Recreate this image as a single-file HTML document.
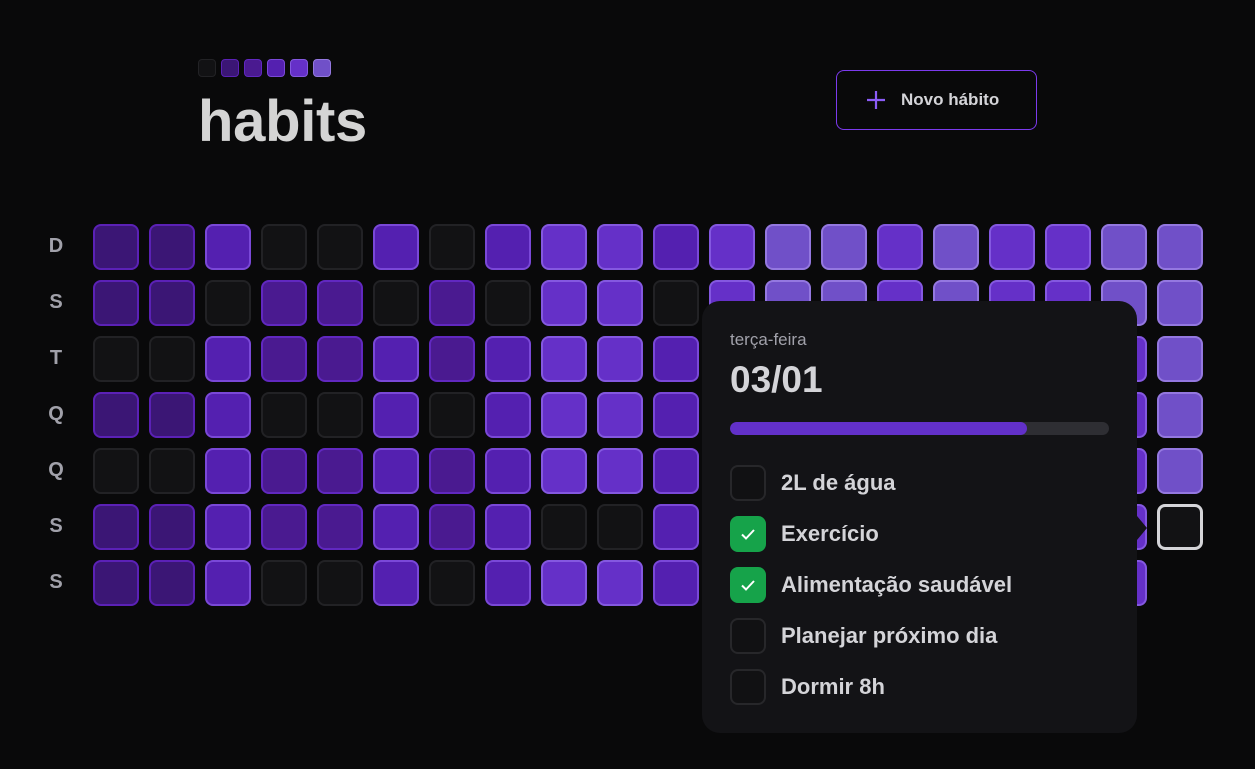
<!DOCTYPE html>
<html><head><meta charset="utf-8"><style>
*{margin:0;padding:0;box-sizing:border-box}
body{width:1255px;height:769px;background:#09090a;font-family:"Liberation Sans",sans-serif;position:relative;overflow:hidden;color:#d4d4d8}
.logo{position:absolute;top:59px;left:198px;display:flex;gap:5px}
.logo i{width:18px;height:18px;border-radius:4px;border:1.5px solid}
h1{position:absolute;left:198px;top:88px;font-size:58px;font-weight:700;color:#d4d4d4;letter-spacing:-0.3px}
.btn{position:absolute;left:836px;top:70px;width:201px;height:60px;border:1.5px solid #7c3aed;border-radius:8px;display:flex;align-items:center;padding-left:28px;font-weight:700;font-size:17px;color:#d4d4d8}
.btn svg{margin-right:14px}
.lbl{position:absolute;left:46px;width:20px;text-align:center;font-size:20px;font-weight:700;color:#a1a1aa}
.grid{position:absolute;left:93px;top:224px;display:grid;grid-template-columns:repeat(20,46px);grid-auto-rows:46px;gap:10px}
.grid i{border-radius:8px;border:2px solid;display:block}
.l0{background:#121214;border-color:#222225!important}
.l1{background:#3b1675;border-color:#5b21b6!important}
.l2{background:#4a1a90;border-color:#6128c0!important}
.l3{background:#5420b0;border-color:#7a48d8!important}
.l4{background:#6530c8;border-color:#8458e0!important}
.l5{background:#7050c8;border-color:#9478e0!important}
.today{background:#121214;border:3px solid #d4d4d8!important}
.none{visibility:hidden}
.tip{position:absolute;left:702px;top:301px;width:435px;height:432px;background:#131316;border-radius:18px;padding:29px 28px}
.tip:after{content:"";position:absolute;right:-10px;top:215px;border:12px solid transparent;border-left:10px solid #131316;border-right:0}
.day{font-size:17px;color:#a1a1aa}
.date{font-size:37px;font-weight:700;color:#d4d4d8;margin-top:9px}
.bar{margin-top:21px;width:379px;height:13px;border-radius:7px;background:#2e2e33;overflow:hidden}
.bar b{display:block;width:297px;height:100%;background:#6230c9;border-radius:7px}
.items{margin-top:30px}
.it{display:flex;align-items:center;height:36px;margin-bottom:15px;font-size:22px;font-weight:700;color:#d4d4d8}
.cb{width:36px;height:36px;border-radius:8px;border:2px solid #27272a;background:#111113;margin-right:15px;display:flex;align-items:center;justify-content:center}
.cb.on{background:#16a34a;border-color:#16a34a}
</style></head><body>
<div class="logo">
<i style="background:#121214;border-color:#222225"></i>
<i style="background:#3b1675;border-color:#5b21b6"></i>
<i style="background:#4a1a90;border-color:#6128c0"></i>
<i style="background:#5420b0;border-color:#7a48d8"></i>
<i style="background:#6530c8;border-color:#8458e0"></i>
<i style="background:#7050c8;border-color:#9478e0"></i>
</div>
<h1>habits</h1>
<div class="btn"><svg width="22" height="22" viewBox="0 0 22 22"><path d="M11 2v18M2 11h18" stroke="#8b5cf6" stroke-width="2.2"/></svg>Novo hábito</div>
<div class="lbl" style="top:235px">D</div>
<div class="lbl" style="top:291px">S</div>
<div class="lbl" style="top:347px">T</div>
<div class="lbl" style="top:403px">Q</div>
<div class="lbl" style="top:459px">Q</div>
<div class="lbl" style="top:515px">S</div>
<div class="lbl" style="top:571px">S</div>
<div class="grid">
<i class="l1"></i><i class="l1"></i><i class="l3"></i><i class="l0"></i><i class="l0"></i><i class="l3"></i><i class="l0"></i><i class="l3"></i><i class="l4"></i><i class="l4"></i><i class="l3"></i><i class="l4"></i><i class="l5"></i><i class="l5"></i><i class="l4"></i><i class="l5"></i><i class="l4"></i><i class="l4"></i><i class="l5"></i><i class="l5"></i>
<i class="l1"></i><i class="l1"></i><i class="l0"></i><i class="l2"></i><i class="l2"></i><i class="l0"></i><i class="l2"></i><i class="l0"></i><i class="l4"></i><i class="l4"></i><i class="l0"></i><i class="l4"></i><i class="l5"></i><i class="l5"></i><i class="l4"></i><i class="l5"></i><i class="l4"></i><i class="l4"></i><i class="l5"></i><i class="l5"></i>
<i class="l0"></i><i class="l0"></i><i class="l3"></i><i class="l2"></i><i class="l2"></i><i class="l3"></i><i class="l2"></i><i class="l3"></i><i class="l4"></i><i class="l4"></i><i class="l3"></i><i class="l4"></i><i class="l4"></i><i class="l4"></i><i class="l4"></i><i class="l4"></i><i class="l4"></i><i class="l4"></i><i class="l4"></i><i class="l5"></i>
<i class="l1"></i><i class="l1"></i><i class="l3"></i><i class="l0"></i><i class="l0"></i><i class="l3"></i><i class="l0"></i><i class="l3"></i><i class="l4"></i><i class="l4"></i><i class="l3"></i><i class="l4"></i><i class="l4"></i><i class="l4"></i><i class="l4"></i><i class="l4"></i><i class="l4"></i><i class="l4"></i><i class="l4"></i><i class="l5"></i>
<i class="l0"></i><i class="l0"></i><i class="l3"></i><i class="l2"></i><i class="l2"></i><i class="l3"></i><i class="l2"></i><i class="l3"></i><i class="l4"></i><i class="l4"></i><i class="l3"></i><i class="l4"></i><i class="l4"></i><i class="l4"></i><i class="l4"></i><i class="l4"></i><i class="l4"></i><i class="l4"></i><i class="l4"></i><i class="l5"></i>
<i class="l1"></i><i class="l1"></i><i class="l3"></i><i class="l2"></i><i class="l2"></i><i class="l3"></i><i class="l2"></i><i class="l3"></i><i class="l0"></i><i class="l0"></i><i class="l3"></i><i class="l4"></i><i class="l4"></i><i class="l4"></i><i class="l4"></i><i class="l4"></i><i class="l4"></i><i class="l4"></i><i class="l4"></i><i class="today"></i>
<i class="l1"></i><i class="l1"></i><i class="l3"></i><i class="l0"></i><i class="l0"></i><i class="l3"></i><i class="l0"></i><i class="l3"></i><i class="l4"></i><i class="l4"></i><i class="l3"></i><i class="l4"></i><i class="l4"></i><i class="l4"></i><i class="l4"></i><i class="l4"></i><i class="l4"></i><i class="l4"></i><i class="l4"></i><i class="none"></i>
</div>
<div class="tip">
<div class="day">terça-feira</div>
<div class="date">03/01</div>
<div class="bar"><b></b></div>
<div class="items">
<div class="it"><span class="cb"></span>2L de água</div>
<div class="it"><span class="cb on"><svg width="20" height="20" viewBox="0 0 20 20"><path d="M4 10.5l4 4 8-8.5" stroke="#fff" stroke-width="2" fill="none"/></svg></span>Exercício</div>
<div class="it"><span class="cb on"><svg width="20" height="20" viewBox="0 0 20 20"><path d="M4 10.5l4 4 8-8.5" stroke="#fff" stroke-width="2" fill="none"/></svg></span>Alimentação saudável</div>
<div class="it"><span class="cb"></span>Planejar próximo dia</div>
<div class="it"><span class="cb"></span>Dormir 8h</div>
</div>
</div>
</body></html>
